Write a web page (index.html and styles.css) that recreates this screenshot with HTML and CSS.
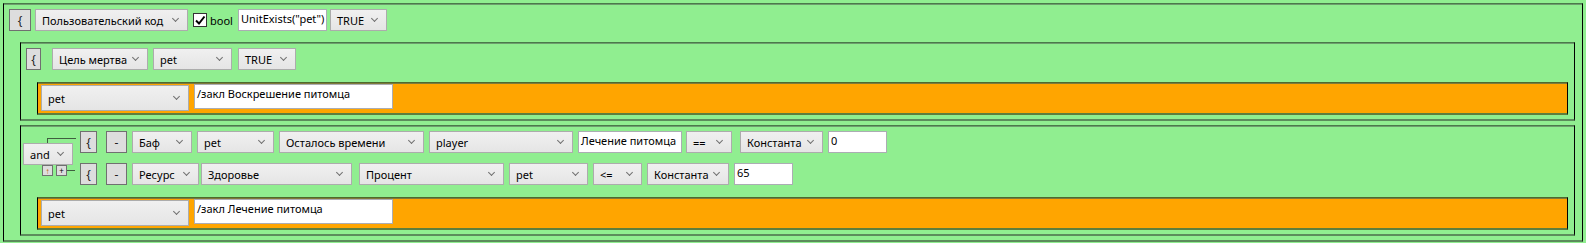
FILE: index.html
```html
<!DOCTYPE html>
<html lang="ru">
<head>
  <meta charset="UTF-8">
  <title>Правило</title>
  <link rel="stylesheet" href="styles.css">
</head>
<body>

  <div class="box outer">
    <!-- Top condition -->
    <div class="row">
      <button class="btn brace">{</button>
      <div class="combo w153 ml4">Пользовательский код</div>
      <span class="check"><svg width="12" height="12" viewBox="0 0 12 12"><path d="M2 6.5 L5 9.5 L10.5 2.5" fill="none" stroke="#000" stroke-width="2"/></svg></span>
      <span class="label ml3">bool</span>
      <div class="edit w89">UnitExists("pet")</div>
      <div class="combo w57 ml3">TRUE</div>
    </div>

    <!-- Block 1 -->
    <div class="box inner">
      <div class="row">
        <button class="btn brace small">{</button>
        <div class="combo w96 ml11">Цель мертва</div>
        <div class="combo w79">pet</div>
        <div class="combo w58 ml6">TRUE</div>
      </div>
      <div class="box action">
        <div class="combo tall w148">pet</div>
        <div class="edit tall w199">/закл Воскрешение питомца</div>
      </div>
    </div>

    <!-- Block 2 -->
    <div class="box inner">
      <div class="logic">
        <div class="logic-side">
          <span class="wire wire-top"></span>
          <div class="combo and">and</div>
          <span class="mini mini-up">↑</span>
          <span class="mini mini-add">+</span>
          <span class="wire wire-bottom"></span>
        </div>
        <div class="rows">
          <div class="row">
            <button class="btn brace mid">{</button>
            <button class="btn minus ml9">-</button>
            <div class="combo w60">Баф</div>
            <div class="combo w77">pet</div>
            <div class="combo w145">Осталось времени</div>
            <div class="combo w144">player</div>
            <div class="edit w104">Лечение питомца</div>
            <div class="combo w46 ml4">==</div>
            <div class="combo w83 ml8">Константа</div>
            <div class="edit w59">0</div>
          </div>
          <div class="row">
            <button class="btn brace mid">{</button>
            <button class="btn minus ml9">-</button>
            <div class="combo w67">Ресурс</div>
            <div class="combo w151 ml2">Здоровье</div>
            <div class="combo w145 ml7">Процент</div>
            <div class="combo w79">pet</div>
            <div class="combo w49">&lt;=</div>
            <div class="combo w82">Константа</div>
            <div class="edit w59">65</div>
          </div>
        </div>
      </div>
      <div class="box action">
        <div class="combo tall w148">pet</div>
        <div class="edit tall w199">/закл Лечение питомца</div>
      </div>
    </div>
  </div>

</body>
</html>
```

FILE: styles.css
```css
html, body {
  margin: 0;
  height: 243px;
  overflow: hidden;
}
body {
  background: #90ee90;
  font-family: "Noto Sans", "Open Sans", sans-serif;
  font-size: 11px;
  color: #000;
  padding: 3px 3px 0 3px;
  box-sizing: border-box;
}

/* framed containers */
.box {
  border-left: 1px solid #000;
  border-right: 1px solid #000;
  border-top: 1px solid #4a7a4a;
  border-bottom: 2px solid #5c8c5c;
  box-shadow: inset 0 1px 0 #6e9e6e;
  box-sizing: border-box;
}
.outer {
  padding: 5px 0 4px 5px;
}
.inner {
  margin: 11px 7px 0 11px;
  padding: 5px 0 4px 5px;
}
.inner + .inner {
  margin-top: 4px;
}
.action {
  background: #ffa500;
  border-top-color: #4e6a2e;
  border-bottom-color: #5e7e3e;
  box-shadow: inset 0 1px 0 #7f7a3a;
  margin: 12px 6px 0 11px;
  padding: 1px 0 2px 3px;
  display: flex;
  gap: 5px;
}

.row {
  display: flex;
  align-items: center;
  height: 22px;
}
.row > * {
  flex: none;
}
.row > * + * {
  margin-left: 5px;
}
.row > .ml2 { margin-left: 2px; }
.row > .ml3 { margin-left: 3px; }
.row > .ml4 { margin-left: 4px; }
.row > .ml6 { margin-left: 6px; }
.row > .ml7 { margin-left: 7px; }
.row > .ml8 { margin-left: 8px; }
.row > .ml9 { margin-left: 9px; }
.row > .ml11 { margin-left: 11px; }

/* controls */
.btn {
  font: inherit;
  font-size: 12px;
  height: 22px;
  width: 22px;
  padding: 0;
  background: #dddddd;
  border: 1px solid #707070;
  color: #222;
}
.brace.small { width: 15px; }
.brace.mid { width: 17px; }
.minus { width: 21px; }

.combo {
  height: 22px;
  box-sizing: border-box;
  border: 1px solid #acacac;
  background: linear-gradient(#f0f0f0, #e5e5e5);
  display: flex;
  align-items: center;
  padding-left: 6px;
  white-space: nowrap;
  overflow: hidden;
}
.combo::after {
  content: "";
  flex: none;
  width: 4px;
  height: 4px;
  border-right: 1px solid #707070;
  border-bottom: 1px solid #707070;
  transform: rotate(45deg);
  margin: -3px 9px 0 auto;
}
.edit {
  height: 22px;
  box-sizing: border-box;
  border: 1px solid #abadb3;
  background: #fff;
  padding: 1px 2px;
  white-space: nowrap;
  overflow: hidden;
  line-height: 16px;
}
.tall { height: 26px; }
.combo.tall { margin-top: 1px; }
.edit.tall { height: 25px; }

.check {
  width: 14px;
  height: 14px;
  box-sizing: border-box;
  border: 1px solid #333;
  background: #fff;
  display: flex;
  align-items: center;
  justify-content: center;
}
.label {
  width: 23px;
}

/* widths */
.w46 { width: 46px; }
.w49 { width: 49px; }
.w57 { width: 57px; }
.w58 { width: 58px; }
.w59 { width: 59px; }
.w60 { width: 60px; }
.w67 { width: 67px; }
.w77 { width: 77px; }
.w79 { width: 79px; }
.w82 { width: 82px; }
.w83 { width: 83px; }
.w89 { width: 89px; }
.w96 { width: 96px; }
.w104 { width: 104px; }
.w144 { width: 144px; }
.w145 { width: 145px; }
.w148 { width: 148px; }
.w151 { width: 151px; }
.w153 { width: 153px; }
.w199 { width: 199px; }

/* logic group */
.logic {
  display: flex;
  margin-left: -5px;
}
.logic-side {
  position: relative;
  width: 59px;
  flex: none;
}
.rows {
  display: flex;
  flex-direction: column;
  gap: 10px;
}
.combo.and {
  position: absolute;
  left: 2px;
  top: 12px;
  width: 50px;
}
.wire {
  position: absolute;
  border-color: #3f5f3f;
  border-style: solid;
  border-width: 0;
}
.wire-top {
  left: 26px;
  top: 7px;
  width: 28px;
  height: 5px;
  border-top-width: 1px;
  border-left-width: 1px;
}
.wire-bottom {
  left: 46px;
  top: 39px;
  width: 8px;
  border-top-width: 1px;
}
.mini {
  position: absolute;
  top: 34px;
  width: 11px;
  height: 11px;
  box-sizing: border-box;
  border: 1px solid #707070;
  background: #dddddd;
  font-size: 8px;
  line-height: 9px;
  text-align: center;
}
.mini-up { left: 21px; color: #c06000; }
.mini-add { left: 35px; }
```
